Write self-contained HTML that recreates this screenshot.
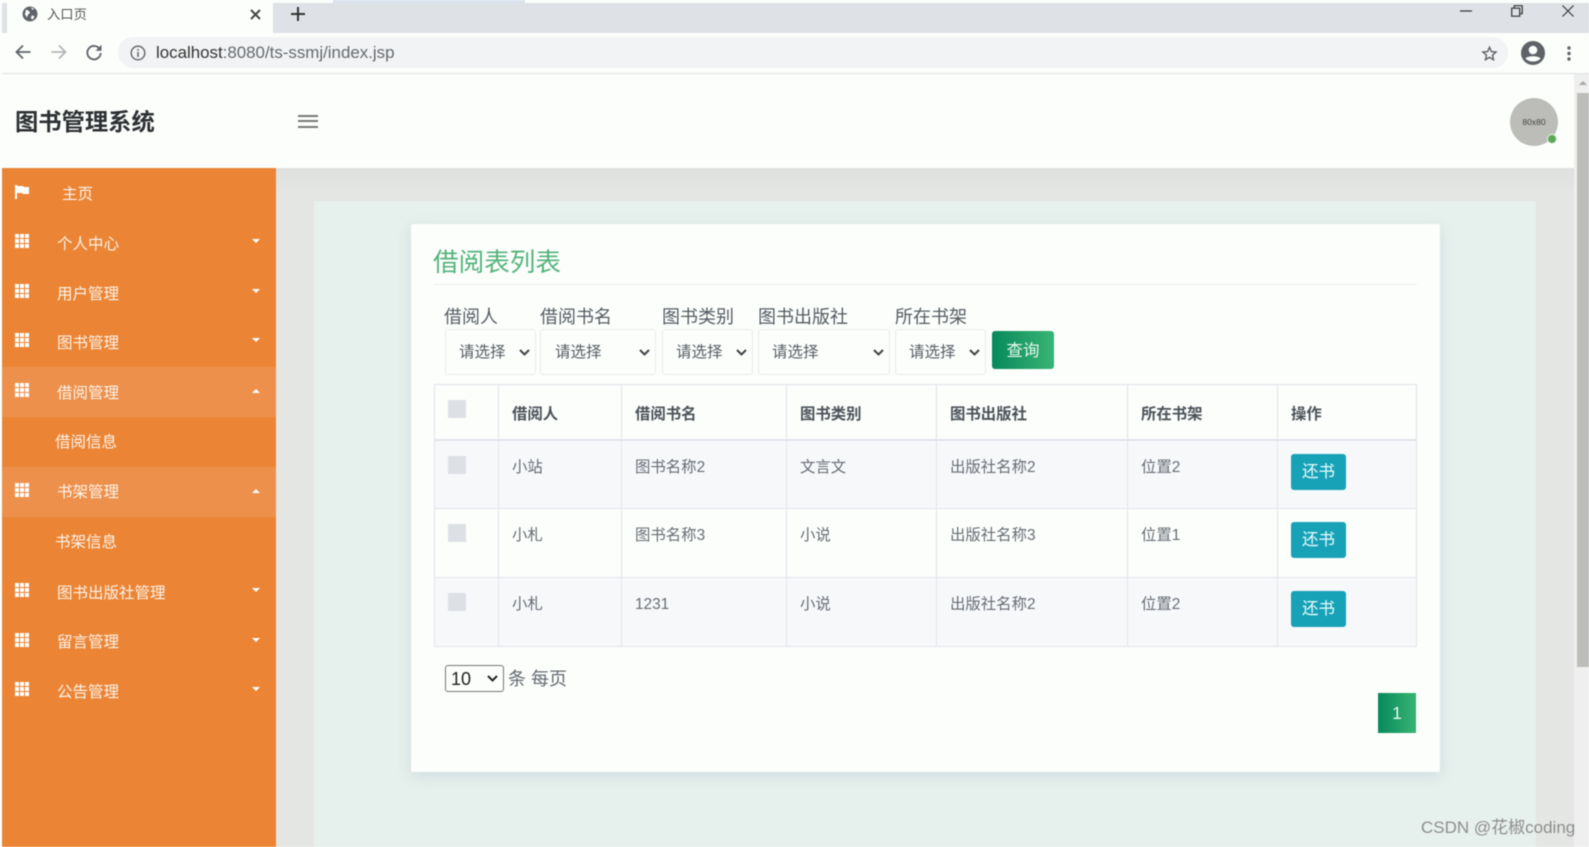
<!DOCTYPE html>
<html lang="zh">
<head>
<meta charset="utf-8">
<title>入口页</title>
<style>
*{box-sizing:border-box}
html,body{margin:0;padding:0;width:1589px;height:847px;overflow:hidden;background:#fcfefb}
body{position:relative;font-family:"Liberation Sans","Noto Sans CJK SC",sans-serif;color:#495057;filter:blur(.4px)}
.a{position:absolute}
.t{position:absolute;white-space:nowrap;line-height:24px;height:24px}
svg{position:absolute;overflow:visible}
.nav{position:absolute;left:2px;width:274px;height:50px}
.nav.on{background:#ec904b}
.nav span{position:absolute;left:55px;top:15px;line-height:24px;font-size:15.5px;color:#fdf3ea;white-space:nowrap}
.nav.sub span{left:53px;top:14px}
.nav i{position:absolute;left:13px;top:16px;width:14px;height:14px;
background:
linear-gradient(#fff,#fff) 0 0/4px 4px no-repeat,linear-gradient(#fff,#fff) 5px 0/4px 4px no-repeat,linear-gradient(#fff,#fff) 10px 0/4px 4px no-repeat,
linear-gradient(#fff,#fff) 0 5px/4px 4px no-repeat,linear-gradient(#fff,#fff) 5px 5px/4px 4px no-repeat,linear-gradient(#fff,#fff) 10px 5px/4px 4px no-repeat,
linear-gradient(#fff,#fff) 0 10px/4px 4px no-repeat,linear-gradient(#fff,#fff) 5px 10px/4px 4px no-repeat,linear-gradient(#fff,#fff) 10px 10px/4px 4px no-repeat}
.nav b{position:absolute;left:250px;top:21px;width:0;height:0;border-left:4px solid transparent;border-right:4px solid transparent;border-top:4px solid #fff}
.nav b.up{top:22px;border-top:0;border-bottom:4px solid #fff}
.lbl{position:absolute;top:305px;font-size:18px;line-height:24px;color:#555c63;white-space:nowrap}
.sel{position:absolute;top:329px;height:46px;border:1px solid #e8edea;border-radius:3px;background:#fcfefb}
.sel select{appearance:none;-webkit-appearance:none;border:0;background:transparent;width:100%;height:100%;padding:0 0 0 13px;font:15.5px "Liberation Sans","Noto Sans CJK SC",sans-serif;color:#565d64;outline:0}
.sel svg{top:19px;right:5px}
table{position:absolute;left:434px;top:384px;width:983px;height:262px;border-collapse:collapse;table-layout:fixed;font-size:15.4px;color:#666d74}
th,td{border:1.5px solid #e1e4ea;padding:0 0 0 13px;vertical-align:top;text-align:left;line-height:24px;position:relative}
th{height:55px;border-bottom:2.5px solid #e1e4ea;font-weight:700;color:#4b5258;padding-top:18px}
td{padding-top:15px;height:69px}
tbody tr:nth-child(odd){background:#f7f8fa}
.cb{position:absolute;left:13px;width:18px;height:18px;background:#dde1e6}
th .cb{top:15px}
td .cb{top:15px}
.ret{position:absolute;left:13px;top:13px;width:55px;height:36px;border-radius:3px;background:#17a2b8;color:#e9fbfd;font-size:16.5px;line-height:36px;text-align:center}
</style>
</head>
<body>
<!-- browser chrome -->
<div class="a" style="left:333px;top:0;width:192px;height:3px;background:#d9e2ee"></div>
<div class="a" style="left:2px;top:3px;width:1587px;height:30px;background:#dee1e6"></div>
<div class="a" style="left:7px;top:3px;width:266px;height:30px;background:#fcfefb"></div>
<div class="a" style="left:2px;top:33px;width:1587px;height:40px;background:#fcfefb"></div>
<div class="a" style="left:2px;top:73px;width:1587px;height:1px;background:#dfe1e5"></div>
<svg style="left:22px;top:6px" width="16" height="16" viewBox="0 0 16 16"><circle cx="8" cy="8" r="7.5" fill="#5f6368"/><path d="M4 3.5l3 1.500 1 2-2 1.500-1 3-2-3zM9.500 9.500l3 .5-1.500 3.500-2-1zM9 1.500l3 1-1.500 1.500z" fill="#fcfefb"/></svg>
<div class="t" style="left:47px;top:3px;font-size:13.3px;color:#555">入口页</div>
<svg style="left:250px;top:9px" width="11" height="11" viewBox="0 0 11 11"><path d="M1 1l9 9M10 1l-9 9" stroke="#444" stroke-width="2" fill="none"/></svg>
<svg style="left:291px;top:7px" width="14" height="14" viewBox="0 0 14 14"><path d="M7 0v14M0 7h14" stroke="#333" stroke-width="2" fill="none"/></svg>
<svg style="left:1460px;top:10px" width="13" height="2" viewBox="0 0 13 2"><path d="M0 1h12" stroke="#333" stroke-width="1.2"/></svg>
<svg style="left:1511px;top:5px" width="12" height="12" viewBox="0 0 12 12"><path d="M.7 3.200h8v8h-8zM3.200 3V.7h8v8H9" stroke="#333" stroke-width="1.2" fill="none"/></svg>
<svg style="left:1562px;top:5px" width="12" height="12" viewBox="0 0 12 12"><path d="M.5 .5l11 11M11.500 .5l-11 11" stroke="#333" stroke-width="1.1" fill="none"/></svg>
<svg style="left:15px;top:44px" width="16" height="16" viewBox="0 0 16 16"><path d="M15.500 8H1.500M8 1.500L1.500 8 8 14.500" stroke="#5f6368" stroke-width="1.800" fill="none"/></svg>
<svg style="left:51px;top:44px" width="16" height="16" viewBox="0 0 16 16"><path d="M.5 8h14M8 1.500L14.500 8 8 14.500" stroke="#b4b6b9" stroke-width="1.800" fill="none"/></svg>
<svg style="left:86px;top:44px" width="16" height="16" viewBox="0 0 16 16"><path d="M13.800 5.300A6.700 6.700 0 1 0 14.700 9" stroke="#5f6368" stroke-width="1.800" fill="none"/><path d="M15.500 .8v6h-6z" fill="#5f6368"/></svg>
<div class="a" style="left:118px;top:37px;width:1390px;height:31px;border-radius:16px;background:#f1f3f4"></div>
<svg style="left:130px;top:45px" width="16" height="16" viewBox="0 0 16 16"><circle cx="8" cy="8" r="6.800" stroke="#5f6368" stroke-width="1.400" fill="none"/><path d="M8 7v5M8 4v1.700" stroke="#5f6368" stroke-width="1.500"/></svg>
<div class="t" style="left:156px;top:41px;font-size:16.9px;color:#666a6e"><span style="color:#333">localhost</span>:8080/ts-ssmj/index.jsp</div>
<svg style="left:1482px;top:46px" width="15" height="15" viewBox="0 0 16 16"><path d="M8 1.300l2 4.600 5 .5-3.800 3.300 1.100 4.900L8 12.100l-4.300 2.500 1.100-4.900L1 6.400l5-.5z" stroke="#5f6368" stroke-width="1.500" fill="none"/></svg>
<svg style="left:1521px;top:41px" width="24" height="24" viewBox="0 0 24 24"><circle cx="12" cy="12" r="12" fill="#5f6368"/><circle cx="12" cy="9" r="4.300" fill="#fcfefb"/><path d="M4.500 17.500c2-3 13-3 15 0-3.500 4-11.500 4-15 0z" fill="#fcfefb"/></svg>
<svg style="left:1566px;top:46px" width="6" height="16" viewBox="0 0 6 16"><circle cx="3" cy="2" r="1.700" fill="#5f6368"/><circle cx="3" cy="7.500" r="1.700" fill="#5f6368"/><circle cx="3" cy="13" r="1.700" fill="#5f6368"/></svg>

<!-- header -->
<div class="a" style="left:2px;top:74px;width:1573px;height:94px;background:#fcfefb"></div>
<div class="t" style="left:15px;top:110px;font-size:23.3px;font-weight:700;color:#2d3033">图书管理系统</div>
<div class="a" style="left:298px;top:115px;width:20px;height:2px;background:#777"></div>
<div class="a" style="left:298px;top:120px;width:20px;height:2px;background:#777"></div>
<div class="a" style="left:298px;top:126px;width:20px;height:2px;background:#777"></div>
<div class="a" style="left:1510px;top:98px;width:48px;height:48px;border-radius:50%;background:#bcbdb9;color:#444;font-size:8.5px;line-height:48px;text-align:center">80x80</div>
<div class="a" style="left:1547px;top:134px;width:10px;height:10px;border-radius:50%;background:#5aaa55;border:1.500px solid #e7efe6"></div>

<!-- main bg -->
<div class="a" style="left:276px;top:168px;width:1299px;height:679px;background:#e4e6e3"></div>
<div class="a" style="left:276px;top:168px;width:1299px;height:24px;background:linear-gradient(#dfe1df,#e4e6e3)"></div>
<div class="a" style="left:314px;top:201px;width:1222px;height:646px;background:#e6f0ec"></div>
<div class="a" style="left:1574px;top:74px;width:15px;height:773px;background:#eeefee"></div>
<div class="a" style="left:1577px;top:93px;width:12px;height:574px;background:#bcbdb9"></div>
<div class="a" style="left:1579px;top:81px;width:0;height:0;border-left:4px solid transparent;border-right:4px solid transparent;border-bottom:4px solid #a9aaa8"></div>

<!-- sidebar -->
<div class="a" style="left:2px;top:168px;width:274px;height:679px;background:#eb8535"></div>
<div class="nav" style="top:168px"><svg style="left:13px;top:17px" width="14" height="14" viewBox="0 0 14 14"><path d="M0 0h2v14H0zM2 1h6l1 1h5v7H8L7 8H2z" fill="#fff"/></svg><span style="left:60px">主页</span></div>
<div class="nav" style="top:218px"><i></i><span>个人中心</span><b></b></div>
<div class="nav" style="top:268px"><i></i><span>用户管理</span><b></b></div>
<div class="nav" style="top:317px"><i></i><span>图书管理</span><b></b></div>
<div class="nav on" style="top:367px"><i></i><span>借阅管理</span><b class="up"></b></div>
<div class="nav sub" style="top:417px"><span>借阅信息</span></div>
<div class="nav on" style="top:467px"><i></i><span style="top:14px">书架管理</span><b class="up"></b></div>
<div class="nav sub" style="top:517px"><span>书架信息</span></div>
<div class="nav" style="top:567px"><i></i><span>图书出版社管理</span><b></b></div>
<div class="nav" style="top:617px"><i></i><span style="top:14px">留言管理</span><b></b></div>
<div class="nav" style="top:666px"><i></i><span>公告管理</span><b></b></div>

<!-- card -->
<div class="a" style="left:411px;top:224px;width:1029px;height:548px;background:#fcfefb;border-radius:2px;box-shadow:0 4px 14px rgba(190,205,215,.55)"></div>
<div class="t" style="left:433px;top:247px;height:32px;line-height:32px;font-size:25.6px;color:#54b37c">借阅表列表</div>
<div class="a" style="left:434px;top:284px;width:983px;height:1px;background:#edefee"></div>

<div class="lbl" style="left:444px">借阅人</div>
<div class="lbl" style="left:540px">借阅书名</div>
<div class="lbl" style="left:662px">图书类别</div>
<div class="lbl" style="left:758px">图书出版社</div>
<div class="lbl" style="left:895px">所在书架</div>

<div class="sel" style="left:445px;width:91px"><select><option>请选择</option></select><svg width="11" height="7" viewBox="0 0 11 7"><path d="M1 1l4.500 4.500L10 1" stroke="#3d4347" stroke-width="2" fill="none"/></svg></div>
<div class="sel" style="left:540px;width:116px"><select style="padding-left:14px"><option>请选择</option></select><svg width="11" height="7" viewBox="0 0 11 7"><path d="M1 1l4.500 4.500L10 1" stroke="#3d4347" stroke-width="2" fill="none"/></svg></div>
<div class="sel" style="left:662px;width:91px"><select><option>请选择</option></select><svg width="11" height="7" viewBox="0 0 11 7"><path d="M1 1l4.500 4.500L10 1" stroke="#3d4347" stroke-width="2" fill="none"/></svg></div>
<div class="sel" style="left:758px;width:132px"><select><option>请选择</option></select><svg width="11" height="7" viewBox="0 0 11 7"><path d="M1 1l4.500 4.500L10 1" stroke="#3d4347" stroke-width="2" fill="none"/></svg></div>
<div class="sel" style="left:895px;width:91px"><select><option>请选择</option></select><svg width="11" height="7" viewBox="0 0 11 7"><path d="M1 1l4.500 4.500L10 1" stroke="#3d4347" stroke-width="2" fill="none"/></svg></div>
<div class="a" style="left:992px;top:331px;width:62px;height:38px;border-radius:3px;background:linear-gradient(90deg,#07895c,#39b474);color:#e8f8ef;font-size:16.5px;line-height:40px;text-align:center">查询</div>

<table>
<colgroup><col style="width:64px"><col style="width:123px"><col style="width:165px"><col style="width:150px"><col style="width:191px"><col style="width:150px"><col></colgroup>
<thead><tr><th><div class="cb"></div></th><th>借阅人</th><th>借阅书名</th><th>图书类别</th><th>图书出版社</th><th>所在书架</th><th>操作</th></tr></thead>
<tbody>
<tr><td><div class="cb"></div></td><td>小站</td><td>图书名称2</td><td>文言文</td><td>出版社名称2</td><td>位置2</td><td><div class="ret">还书</div></td></tr>
<tr><td><div class="cb"></div></td><td>小札</td><td>图书名称3</td><td>小说</td><td>出版社名称3</td><td>位置1</td><td><div class="ret">还书</div></td></tr>
<tr><td><div class="cb"></div></td><td>小札</td><td>1231</td><td>小说</td><td>出版社名称2</td><td>位置2</td><td><div class="ret">还书</div></td></tr>
</tbody>
</table>

<div class="a" style="left:445px;top:665px;width:59px;height:27px;border:1px solid #767676;border-radius:3px;background:#fcfefb;color:#222;font-size:18px;line-height:26px;padding-left:5px">10<svg style="right:5px;top:9px" width="11" height="7" viewBox="0 0 11 7"><path d="M1 1l4.500 4.500L10 1" stroke="#222" stroke-width="2" fill="none"/></svg></div>
<div class="t" style="left:508px;top:667px;font-size:18px;color:#646b72">条 每页</div>
<div class="a" style="left:1378px;top:693px;width:38px;height:40px;background:linear-gradient(90deg,#07895c,#39b474);color:#e8f8ef;font-size:17.5px;line-height:40px;text-align:center">1</div>

<div class="t" style="left:1421px;top:816px;font-size:17px;color:#8d8f8e">CSDN @花椒coding</div>
</body>
</html>
